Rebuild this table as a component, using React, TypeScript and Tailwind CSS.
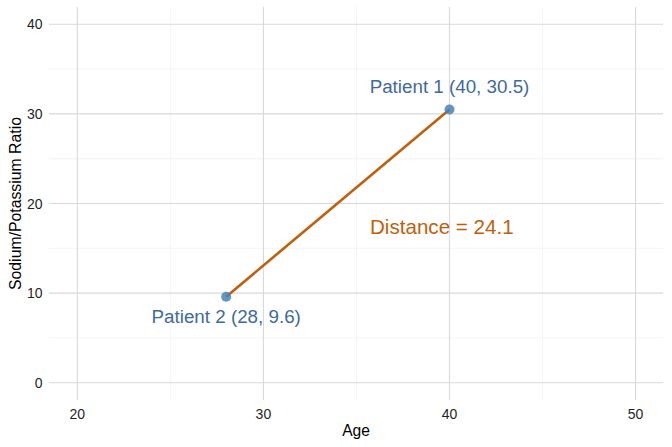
const X0 = 77.3;
const XS = 18.61;
const Y0 = 382.7;
const YS = 8.96;

const px = (v: number) => X0 + (v - 20) * XS;
const py = (v: number) => Y0 - v * YS;

const LEFT = 49;
const RIGHT = 663;
const TOP = 7;
const BOTTOM = 400;

export default function App() {
  const xMajor = [20, 30, 40, 50];
  const xMinor = [25, 35, 45];
  const yMajor = [0, 10, 20, 30, 40];
  const yMinor = [5, 15, 25, 35];

  const p1 = { x: px(40), y: py(30.5) };
  const p2 = { x: px(28), y: py(9.6) };

  return (
    <div className="w-[672px] h-[447px] bg-white font-['Liberation_Sans',Arial,sans-serif]">
      <svg width="672" height="447" viewBox="0 0 672 447" className="block">
        {/* minor grid */}
        {xMinor.map((v) => (
          <line key={`xm${v}`} x1={px(v)} x2={px(v)} y1={TOP} y2={BOTTOM} stroke="#ededed" strokeWidth={0.6} />
        ))}
        {yMinor.map((v) => (
          <line key={`ym${v}`} x1={LEFT} x2={RIGHT} y1={py(v)} y2={py(v)} stroke="#ededed" strokeWidth={0.6} />
        ))}
        {/* major grid */}
        {xMajor.map((v) => (
          <line key={`xM${v}`} x1={px(v)} x2={px(v)} y1={TOP} y2={BOTTOM} stroke="#d9d9d9" strokeWidth={1.1} />
        ))}
        {yMajor.map((v) => (
          <line key={`yM${v}`} x1={LEFT} x2={RIGHT} y1={py(v)} y2={py(v)} stroke="#d9d9d9" strokeWidth={1.1} />
        ))}

        {/* segment + points */}
        <line x1={p2.x} y1={p2.y} x2={p1.x} y2={p1.y} stroke="#c0600c" strokeWidth={2.6} />
        <circle cx={p1.x} cy={p1.y} r={5} fill="#4682b4" fillOpacity={0.85} />
        <circle cx={p2.x} cy={p2.y} r={5} fill="#4682b4" fillOpacity={0.85} />

        {/* labels */}
        <text x={p1.x} y={92.7} textAnchor="middle" fontSize={18.8} fill="#3e6a9f">
          Patient 1 (40, 30.5)
        </text>
        <text x={p2.x} y={322.7} textAnchor="middle" fontSize={18.8} fill="#3e6a9f">
          Patient 2 (28, 9.6)
        </text>
        <text x={370} y={234} fontSize={20.6} fill="#c0600c">
          Distance = 24.1
        </text>

        {/* y ticks */}
        {yMajor.map((v) => (
          <text key={`yt${v}`} x={42.5} y={py(v) + 5} textAnchor="end" fontSize={14} fill="#1f1f1f">
            {v}
          </text>
        ))}
        {/* x ticks */}
        {xMajor.map((v) => (
          <text key={`xt${v}`} x={px(v)} y={419} textAnchor="middle" fontSize={14} fill="#1f1f1f">
            {v}
          </text>
        ))}

        {/* axis titles */}
        <text x={356} y={436} textAnchor="middle" fontSize={15.6} fill="#000">
          Age
        </text>
        <text
          x={0}
          y={0}
          transform={`translate(20.8 ${(TOP + BOTTOM) / 2}) rotate(-90)`}
          textAnchor="middle"
          fontSize={15.8}
          fill="#000"
        >
          Sodium/Potassium Ratio
        </text>
      </svg>
    </div>
  );
}
